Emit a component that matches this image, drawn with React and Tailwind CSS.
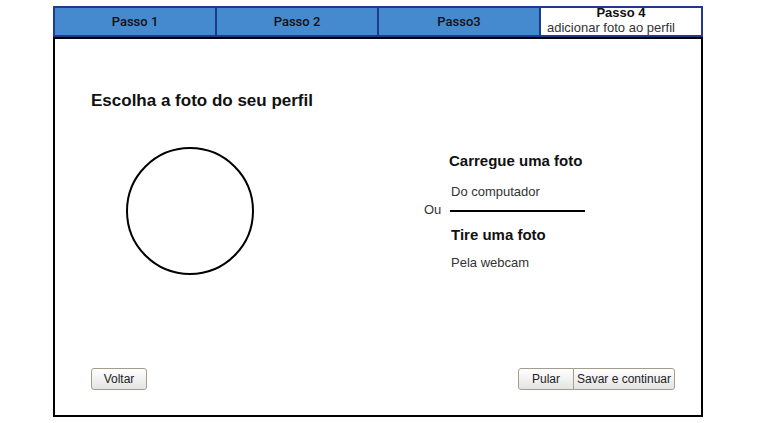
import React from 'react';

const tabs = ['Passo 1', 'Passo 2', 'Passo3'];

const Btn = ({ children, className = '' }) => (
    <button
        className={`h-[22px] border border-[#a59c90] bg-gradient-to-b from-white to-[#e4e4e4] text-[12px] text-[#222] leading-none ${className}`}
    >
        {children}
    </button>
);

const App = () => {
    return (
        <div className="w-[759px] h-[423px] bg-white pt-[6px] pl-[53px] font-['Liberation_Sans',Arial,sans-serif] text-[#111]">
            <div className="flex w-[650px] h-[31px] border-2 border-[#1f3a8a] bg-[#4589cf]">
                {tabs.map(t => (
                    <div
                        key={t}
                        className="w-[162px] flex items-center justify-center border-r-2 border-[#1f3a8a] font-['Roboto',sans-serif] font-medium text-[13px] text-[#111]"
                    >
                        {t}
                    </div>
                ))}
                <div className="flex-1 bg-white flex flex-col justify-center leading-[15px]">
                    <span className="self-center font-bold text-[13px] text-[#111] -mt-[3px]">Passo 4</span>
                    <span className="pl-[6px] text-[13px] text-[#333] whitespace-nowrap">adicionar foto ao perfil</span>
                </div>
            </div>

            <div className="w-[650px] h-[380px] border-2 border-black flex flex-col">
                <h2 className="mt-[51px] ml-[36px] text-[17px] leading-[22px] font-bold text-[#111]">
                    Escolha a foto do seu perfil
                </h2>

                <div className="flex items-start mt-[35px]">
                    <div className="ml-[71px] w-[128px] h-[128px] rounded-full border-2 border-black shrink-0" />

                    <div className="ml-[170px] flex flex-col text-[#333]">
                        <div className="mt-[5px] pl-[25px] text-[15px] leading-[18px] font-bold text-[#111]">
                            Carregue uma foto
                        </div>
                        <div className="mt-[14px] pl-[27px] text-[13px] leading-[16px]">Do computador</div>
                        <div className="mt-[3px] flex items-center h-[16px]">
                            <span className="text-[13px] leading-[16px] w-[17px] mt-[-2px]">Ou</span>
                            <div className="ml-[9px] w-[135px] h-[2px] bg-black" />
                        </div>
                        <div className="mt-[7px] pl-[27px] text-[15px] leading-[18px] font-bold text-[#111]">
                            Tire uma foto
                        </div>
                        <div className="mt-[11px] pl-[27px] text-[13px] leading-[16px]">Pela webcam</div>
                    </div>
                </div>

                <div className="mt-auto mb-[25px] flex justify-between items-end">
                    <Btn className="ml-[36px] w-[56px] rounded-[3px]">Voltar</Btn>
                    <div className="flex mr-[26px]">
                        <Btn className="w-[56px] rounded-l-[3px]">Pular</Btn>
                        <Btn className="w-[102px] -ml-px rounded-r-[3px]">Savar e continuar</Btn>
                    </div>
                </div>
            </div>
        </div>
    );
};

export default App;
